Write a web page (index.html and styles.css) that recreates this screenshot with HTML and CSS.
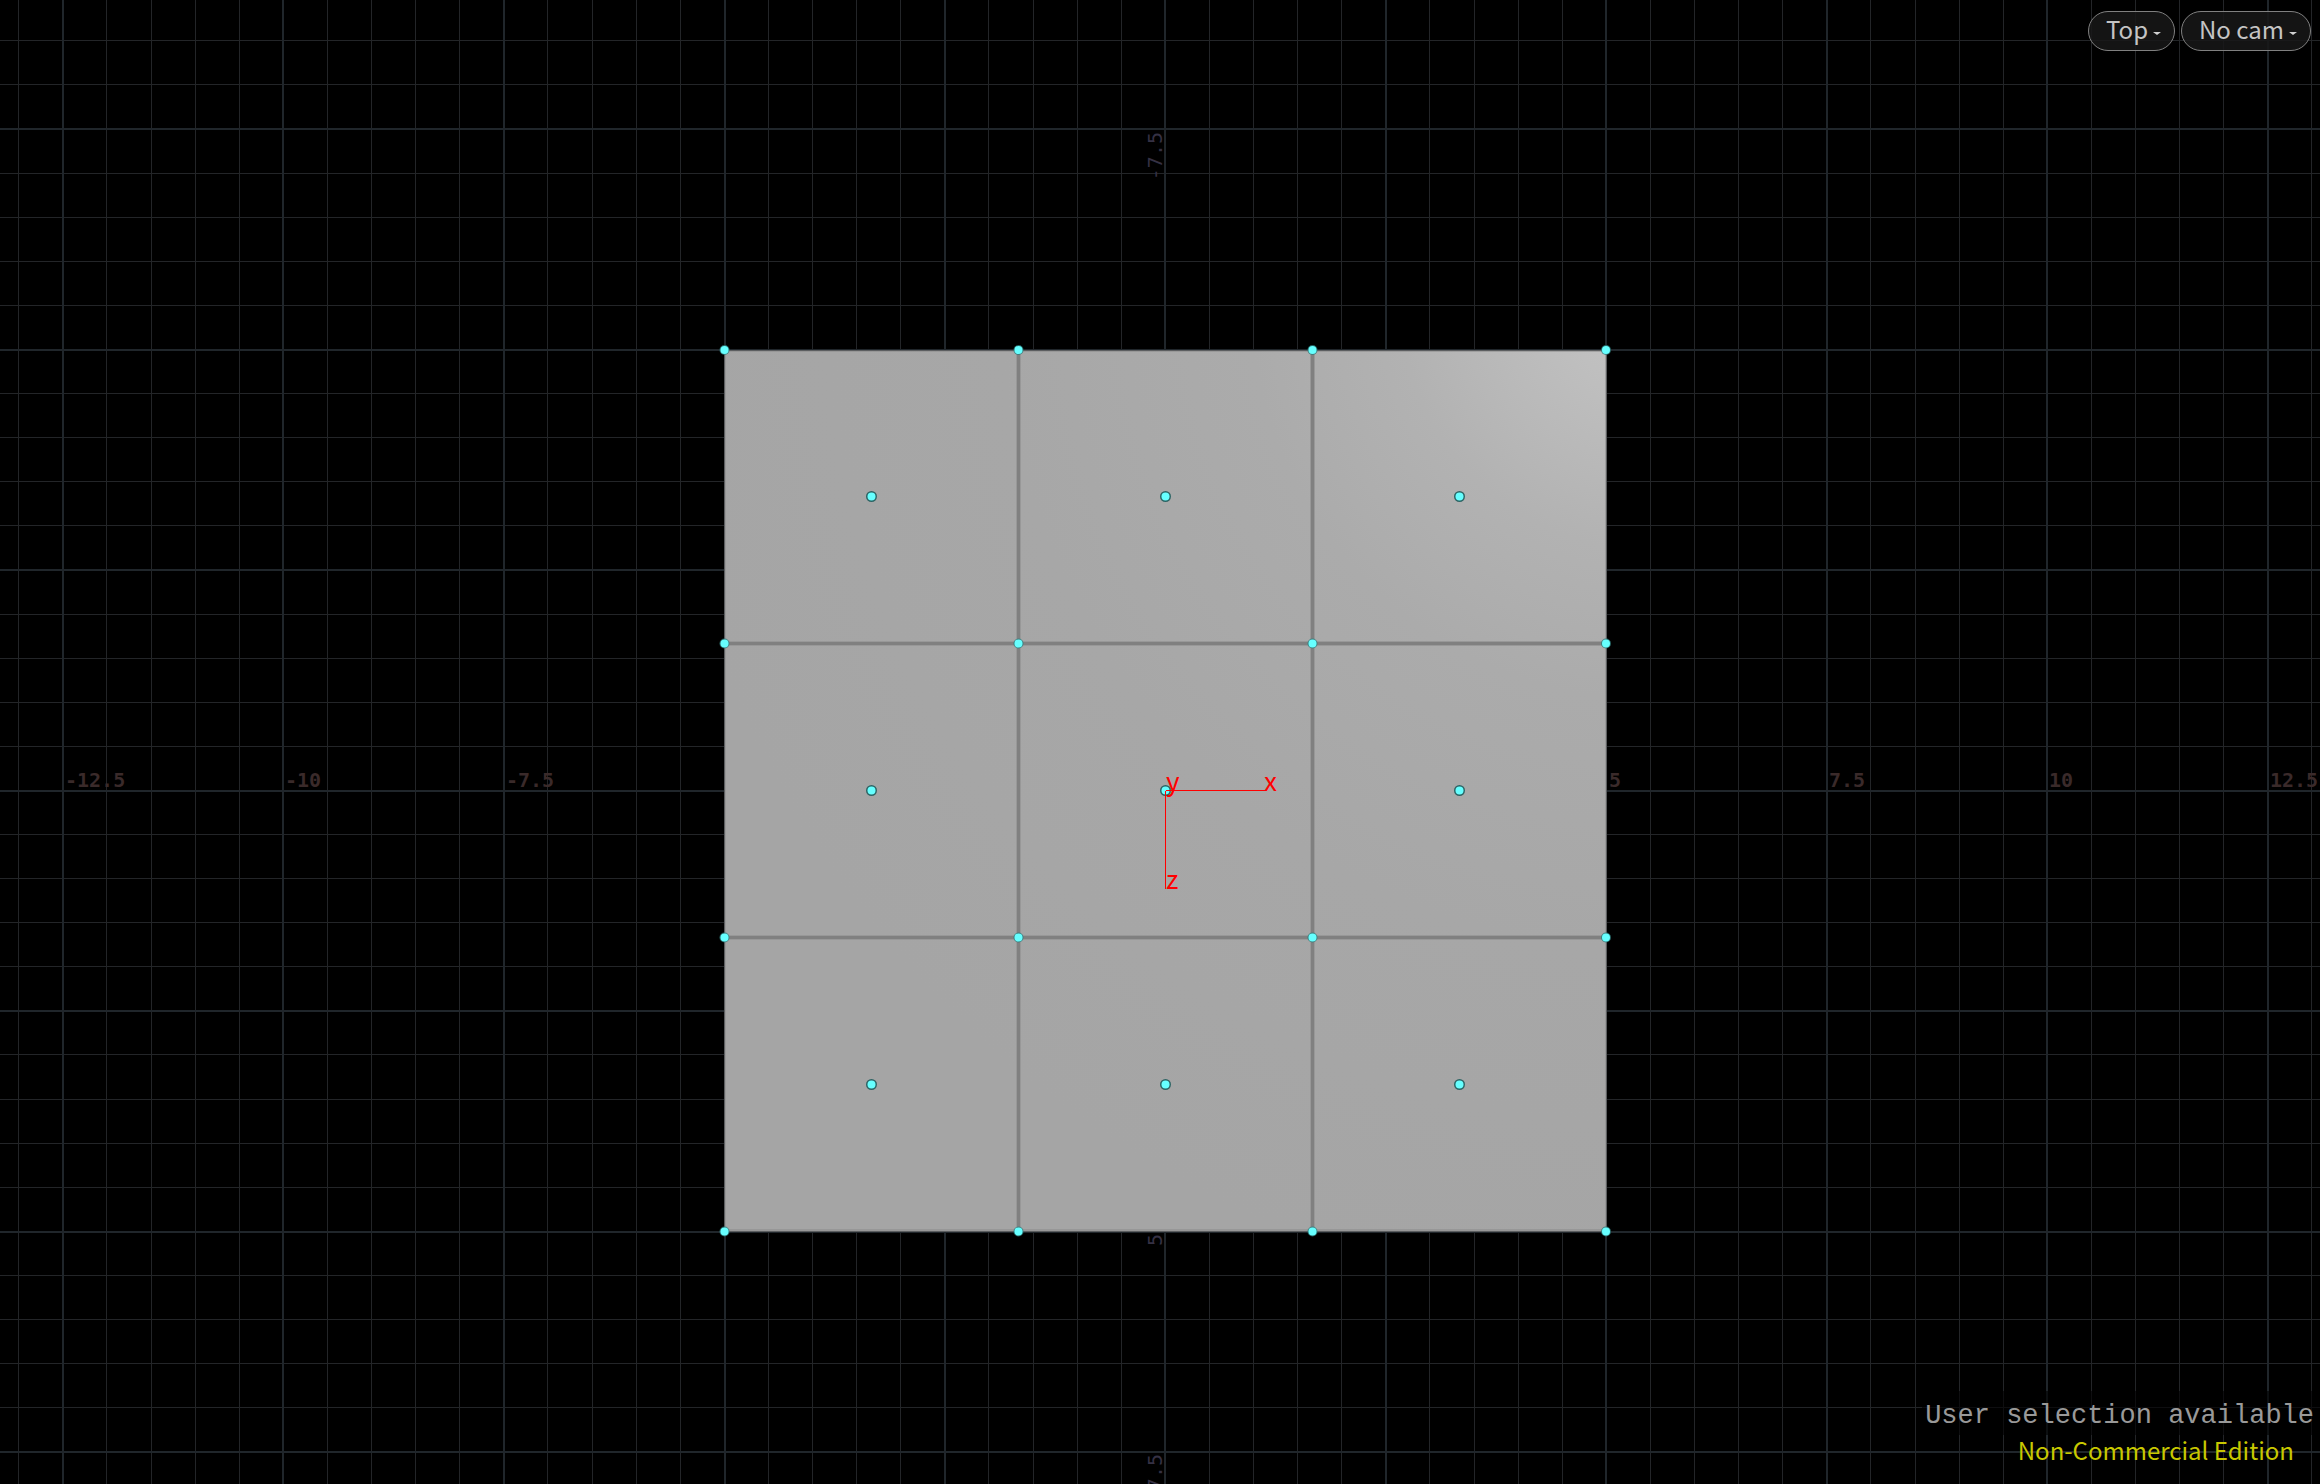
FILE: index.html
```
<!DOCTYPE html>
<html lang="en">
<head>
<meta charset="utf-8">
<title>Scene View</title>
<link rel="stylesheet" href="styles.css">
</head>
<body>
<main class="viewport">
  <svg class="scene" viewBox="0 0 2320 1484" preserveAspectRatio="xMidYMid slice" role="img" aria-label="Top view of a three by three grid">
    <defs>
      <radialGradient id="shade" gradientUnits="userSpaceOnUse" cx="1650" cy="300" r="1000">
        <stop offset="0" stop-color="#c6c6c6"/>
        <stop offset=".1" stop-color="#bebebe"/>
        <stop offset=".25" stop-color="#b2b2b2"/>
        <stop offset=".4" stop-color="#ababab"/>
        <stop offset=".65" stop-color="#a7a7a7"/>
        <stop offset="1" stop-color="#a5a5a5"/>
      </radialGradient>
      <g id="vertex"><circle class="halo" r="5"/><circle class="dot" r="4"/></g>
      <g id="prim"><circle class="rim" r="5.5"/><circle class="dot" r="4"/></g>
    </defs>

    <!-- construction plane -->
    <path class="minor" d="M18.5 0V1484M106.5 0V1484M151.5 0V1484M195.5 0V1484M239.5 0V1484M327.5 0V1484M371.5 0V1484M415.5 0V1484M459.5 0V1484M547.5 0V1484M592.5 0V1484M636.5 0V1484M680.5 0V1484M768.5 0V1484M812.5 0V1484M856.5 0V1484M900.5 0V1484M988.5 0V1484M1033.5 0V1484M1077.5 0V1484M1121.5 0V1484M1209.5 0V1484M1253.5 0V1484M1297.5 0V1484M1341.5 0V1484M1429.5 0V1484M1474.5 0V1484M1518.5 0V1484M1562.5 0V1484M1650.5 0V1484M1694.5 0V1484M1738.5 0V1484M1782.5 0V1484M1870.5 0V1484M1915.5 0V1484M1959.5 0V1484M2003.5 0V1484M2091.5 0V1484M2135.5 0V1484M2179.5 0V1484M2223.5 0V1484M2311.5 0V1484"/>
    <path class="minor" d="M0 40.5H2320M0 84.5H2320M0 173.5H2320M0 217.5H2320M0 261.5H2320M0 305.5H2320M0 393.5H2320M0 437.5H2320M0 481.5H2320M0 525.5H2320M0 614.5H2320M0 658.5H2320M0 702.5H2320M0 746.5H2320M0 834.5H2320M0 878.5H2320M0 922.5H2320M0 966.5H2320M0 1054.5H2320M0 1099.5H2320M0 1143.5H2320M0 1187.5H2320M0 1275.5H2320M0 1319.5H2320M0 1363.5H2320M0 1407.5H2320"/>
    <path class="major" d="M63 0V1484M283 0V1484M504 0V1484M725 0V1484M945 0V1484M1165 0V1484M1386 0V1484M1606 0V1484M1827 0V1484M2047 0V1484M2268 0V1484M0 129H2320M0 350H2320M0 570H2320M0 791H2320M0 1011H2320M0 1232H2320M0 1452H2320"/>

    <g class="ruler ruler-x">
      <text x="65" y="787">-12.5</text>
      <text x="285" y="787">-10</text>
      <text x="506" y="787">-7.5</text>
      <text x="1609" y="787">5</text>
      <text x="1829" y="787">7.5</text>
      <text x="2049" y="787">10</text>
      <text x="2270" y="787">12.5</text>
    </g>
    <g class="ruler ruler-z">
      <text transform="translate(1162 132) rotate(-90)">-7.5</text>
      <text transform="translate(1162 1234) rotate(-90)">5</text>
      <text transform="translate(1162 1454) rotate(-90)">7.5</text>
    </g>

    <!-- geometry -->
    <rect x="724" y="350" width="883" height="882" fill="url(#shade)"/>
    <path class="seam-soft" d="M1018.5 350V1232M1312.5 350V1232M724 643.5H1607M724 937.5H1607"/>
    <path class="seam" d="M1018.5 350V1232M1312.5 350V1232M724 643.5H1607M724 937.5H1607"/>
    <path class="border-soft" d="M725 351H1606V1230H725Z"/>
    <path class="border" d="M724.5 350.5H1606.5V1231.5H724.5Z"/>

    <g>
      <use href="#vertex" x="724.5" y="350"/><use href="#vertex" x="1018.5" y="350"/><use href="#vertex" x="1312.5" y="350"/><use href="#vertex" x="1606" y="350"/>
      <use href="#vertex" x="724.5" y="643.5"/><use href="#vertex" x="1018.5" y="643.5"/><use href="#vertex" x="1312.5" y="643.5"/><use href="#vertex" x="1606" y="643.5"/>
      <use href="#vertex" x="724.5" y="937.5"/><use href="#vertex" x="1018.5" y="937.5"/><use href="#vertex" x="1312.5" y="937.5"/><use href="#vertex" x="1606" y="937.5"/>
      <use href="#vertex" x="724.5" y="1231.5"/><use href="#vertex" x="1018.5" y="1231.5"/><use href="#vertex" x="1312.5" y="1231.5"/><use href="#vertex" x="1606" y="1231.5"/>
      <use href="#prim" x="871.5" y="496.5"/><use href="#prim" x="1165.5" y="496.5"/><use href="#prim" x="1459.5" y="496.5"/>
      <use href="#prim" x="871.5" y="790.5"/><use href="#prim" x="1165.5" y="790.5"/><use href="#prim" x="1459.5" y="790.5"/>
      <use href="#prim" x="871.5" y="1084.5"/><use href="#prim" x="1165.5" y="1084.5"/><use href="#prim" x="1459.5" y="1084.5"/>
    </g>

    <!-- origin axes -->
    <path class="axis" d="M1166 790.5H1265M1165.5 791V889"/>
    <g class="axis-name">
      <text x="1264" y="791">x</text>
      <text x="1166" y="791">y</text>
      <text x="1166" y="889">z</text>
    </g>
  </svg>

  <header class="menus">
    <button class="pill" type="button" aria-haspopup="menu">Top<span class="caret"></span></button>
    <button class="pill" type="button" aria-haspopup="menu">No cam<span class="caret"></span></button>
  </header>

  <footer class="messages">
    <p class="status">User selection available</p>
    <p class="edition">Non-Commercial Edition</p>
  </footer>
</main>
</body>
</html>
```
FILE: styles.css
```
body {
  margin: 0;
  background: #000;
  font-family: "Noto Sans CJK SC", "Noto Sans", sans-serif;
}

.viewport {
  position: relative;
  display: flex;
  flex-direction: column;
  justify-content: space-between;
  min-height: 100vh;
  overflow: hidden;
}

/* The scene lies under the menus and messages. */
.scene {
  position: absolute;
  inset: 0;
  width: 100%;
  height: 100%;
}

.minor, .major { fill: none; }
.minor { stroke: #232528; stroke-width: 1; }
.major { stroke: #20262b; stroke-width: 2; }

.ruler { font: 20px "DejaVu Sans Mono", monospace; }
.ruler-x { fill: #3a2a2a; font-weight: bold; }
.ruler-z { fill: #353144; text-anchor: end; }

.seam, .seam-soft, .border, .border-soft { fill: none; }
.seam-soft { stroke: #989898; stroke-width: 5; }
.seam { stroke: #808080; stroke-width: 3; }
.border-soft { stroke: #8e8e8e; stroke-opacity: .6; stroke-width: 2; }
.border { stroke: #5c5e60; stroke-width: 1; }

.dot { fill: #66ffff; }
.halo { fill: #2f7c7c; fill-opacity: .8; }
.rim { fill: #2c6464; }

.axis { fill: none; stroke: #f00; stroke-width: 1; }
.axis-name {
  fill: #f00;
  font-size: 26px;
}

.menus {
  position: relative;
  display: flex;
  justify-content: flex-end;
  gap: 6px;
  padding: 11px 9px;
}

.pill {
  display: flex;
  align-items: center;
  gap: 5px;
  height: 40px;
  padding: 0 13px 4px 17px;
  border: 1px solid #808080;
  border-radius: 20px;
  background: rgba(24, 24, 24, .85);
  color: #c4c4c4;
  font: 24px/34px "Noto Sans CJK SC", "Noto Sans", sans-serif;
}

.caret {
  margin-top: 9px;
  border: 4px solid transparent;
  border-top: 3px solid #d0d0d0;
  border-bottom: 0;
}

.messages {
  position: relative;
  display: flex;
  flex-direction: column;
  align-items: flex-end;
}

.messages p { margin: 0; }

.status {
  padding: 6px 6px 0 3px;
  background: rgba(0, 0, 0, .6);
  color: #999;
  font: 27px/38px "Liberation Mono", monospace;
}

.edition {
  padding: 0 26px 19px 0;
  color: #c8c800;
  font-size: 24px;
  line-height: 30px;
}
```
